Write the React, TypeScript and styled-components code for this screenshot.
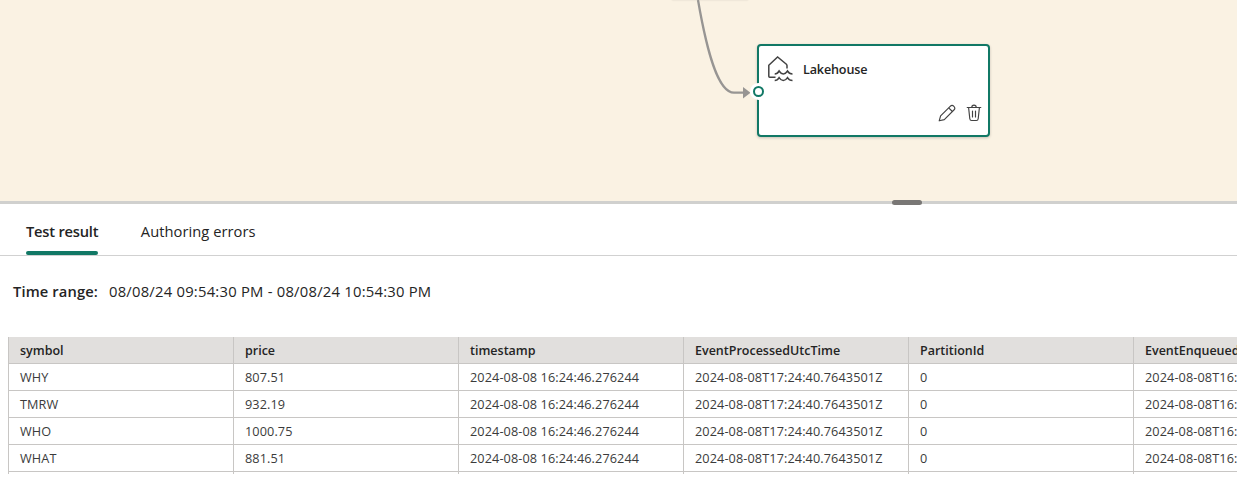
import React from "react";
import styled, { createGlobalStyle } from "styled-components";

const GlobalStyle = createGlobalStyle`
  *, *::before, *::after { box-sizing: border-box; }
  body {
    margin: 0;
    overflow: hidden;
    background: #fff;
    color: #242424;
    font-family: "Open Sans", "Noto Sans", sans-serif;
  }
`;

const Page = styled.main`
  display: flex;
  flex-direction: column;
  height: 483px;
  overflow: hidden;
`;

const Canvas = styled.section`
  position: relative;
  flex: 0 0 201px;
  overflow: hidden;
  background: #faf2e3;
`;

const UpstreamShadow = styled.div`
  position: absolute;
  left: 672px;
  top: -6px;
  width: 76px;
  height: 6px;
  box-shadow: 0 0 2px rgba(0, 0, 0, 0.16);
`;

const Edge = styled.svg`
  position: absolute;
  left: 680px;
  top: 0;
`;

const NodeCard = styled.article`
  position: absolute;
  left: 757px;
  top: 44px;
  width: 233px;
  height: 93px;
  padding: 9px 6px 13px 8px;
  display: flex;
  flex-direction: column;
  justify-content: space-between;
  background: #fff;
  border: 2px solid #117865;
  border-radius: 4px;
  box-shadow: 0 1px 3px rgba(0, 0, 0, 0.2);
`;

const NodeHeader = styled.div`
  display: flex;
  align-items: flex-start;
  gap: 9px;
`;

const NodeTitle = styled.span`
  padding-top: 6px;
  font-size: 12.6px;
  line-height: 18px;
  font-weight: 600;
  letter-spacing: -0.15px;
`;

const NodeActions = styled.div`
  display: flex;
  justify-content: flex-end;
  gap: 10px;
`;

const Port = styled.span`
  position: absolute;
  left: -9px;
  top: 37px;
  width: 17px;
  height: 17px;
  border-radius: 50%;
  background: #fff;
  display: grid;
  place-items: center;

  &::after {
    content: "";
    width: 11px;
    height: 11px;
    border: 2px solid #117865;
    border-radius: 50%;
  }
`;

const Splitter = styled.div`
  position: relative;
  flex: 0 0 3px;
  background: #d0d0ce;
`;

const SplitterGrip = styled.span`
  position: absolute;
  left: 892px;
  top: -1px;
  width: 30px;
  height: 5px;
  border-radius: 2.5px;
  background: #797775;
`;

const TabBar = styled.nav`
  flex: 0 0 52px;
  display: flex;
  gap: 42.5px;
  padding-left: 26px;
  border-bottom: 1px solid #d1d1d1;
`;

const Tab = styled.div<{ $active?: boolean; $spacing: number }>`
  display: flex;
  flex-direction: column;
  justify-content: space-between;
  padding-top: 17px;
  font-size: 14.7px;
  line-height: 20px;
  font-weight: ${(p) => (p.$active ? 600 : 400)};
  letter-spacing: ${(p) => p.$spacing}px;
  white-space: nowrap;

  &::after {
    content: "";
    height: 4px;
    border-radius: 2px;
    background: ${(p) => (p.$active ? "#117865" : "transparent")};
  }
`;

const TimeRange = styled.div`
  flex: 0 0 81px;
  display: flex;
  gap: 11px;
  padding: 25px 0 0 13px;
  line-height: 20px;
  white-space: nowrap;
`;

const RangeLabel = styled.span`
  font-size: 14.7px;
  font-weight: 600;
  letter-spacing: 0.13px;
`;

const RangeValue = styled.span`
  font-size: 14.8px;
  letter-spacing: 0.23px;
`;

const Grid = styled.div`
  height: 137px;
  margin-left: 8px;
  overflow: hidden;
`;

const Row = styled.div<{ $header?: boolean }>`
  display: grid;
  grid-template-columns: repeat(6, 225px);
  width: 1350px;
  height: 27px;
  background: ${(p) => (p.$header ? "#e1dfdd" : "#fff")};
  font-size: ${(p) => (p.$header ? 12.5 : 12.7)}px;
  font-weight: ${(p) => (p.$header ? 600 : 400)};
  line-height: ${(p) => (p.$header ? 27 : 26)}px;
  letter-spacing: ${(p) => (p.$header ? 0 : 0.1)}px;
  color: ${(p) => (p.$header ? "#242424" : "#3b3b3b")};
`;

const Cell = styled.div`
  height: 27px;
  border-left: 1px solid #c8c6c4;
  border-bottom: 1px solid #c8c6c4;
  padding-left: 11px;
  white-space: nowrap;
  overflow: hidden;
`;

const columns = [
  "symbol",
  "price",
  "timestamp",
  "EventProcessedUtcTime",
  "PartitionId",
  "EventEnqueuedUtcTime",
];

const quotes = [
  ["WHY", "807.51"],
  ["TMRW", "932.19"],
  ["WHO", "1000.75"],
  ["WHAT", "881.51"],
];

const rows = [
  ...quotes.map(([symbol, price]) => [
    symbol,
    price,
    "2024-08-08 16:24:46.276244",
    "2024-08-08T17:24:40.7643501Z",
    "0",
    "2024-08-08T16:24:46.2860000Z",
  ]),
  ["", "", "", "", "", ""],
];

const LakehouseIcon = () => (
  <svg width="27" height="28" viewBox="0 0 27 28" fill="none" stroke="#424242" strokeWidth="1.5">
    <path d="M8.5 22.2H2.7Q1.8 22.2 1.8 21.3V10.2L10.6 1.9L19.4 9.2Q20 9.8 20 10.6V13.4" />
    <path d="M7.7 18.9Q10.4 18.9 12.1 16Q14 18.9 16.3 18.9Q18.6 18.9 20.5 16Q22.2 18.9 25.5 18.9" />
    <path d="M7.7 25.6Q10.4 25.6 12.1 22.7Q14 25.6 16.3 25.6Q18.6 25.6 20.5 22.7Q22.2 25.6 25.5 25.6" />
  </svg>
);

const PencilIcon = () => (
  <svg width="18" height="18" viewBox="0 0 18 18" fill="none" stroke="#424242" strokeWidth="1.15" strokeLinejoin="round">
    <path d="M1.2 16.8L2.6 11.9L12.2 2.3A2.6 2.6 0 0 1 15.9 6L6.3 15.6L1.2 16.8Z" />
    <path d="M10.7 3.8L14.4 7.5" />
  </svg>
);

const TrashIcon = () => (
  <svg width="16" height="18" viewBox="0 0 16 18" fill="none" stroke="#424242" strokeWidth="1.15" strokeLinecap="round">
    <path d="M1.2 3.5H14.8M5.8 3.3A2.2 2.2 0 0 1 10.2 3.3M2.6 3.6L3.8 14.8Q4 16.5 5.6 16.5H10.4Q12 16.5 12.2 14.8L13.4 3.6M6.5 7V13M9.5 7V13" />
  </svg>
);

export default function App() {
  return (
    <Page>
      <GlobalStyle />
      <Canvas>
        <UpstreamShadow />
        <Edge width="80" height="110" viewBox="0 0 80 110">
          <path d="M18 0C27 52 38 92.7 54 92.7H64" fill="none" stroke="#979593" strokeWidth="2.3" />
          <path d="M63 87L70.5 92.7L63 98.4Z" fill="#979593" />
        </Edge>
        <NodeCard>
          <NodeHeader>
            <LakehouseIcon />
            <NodeTitle>Lakehouse</NodeTitle>
          </NodeHeader>
          <NodeActions>
            <PencilIcon />
            <TrashIcon />
          </NodeActions>
          <Port />
        </NodeCard>
      </Canvas>
      <Splitter>
        <SplitterGrip />
      </Splitter>
      <TabBar>
        <Tab $active $spacing={-0.22}>Test result</Tab>
        <Tab $spacing={0.05}>Authoring errors</Tab>
      </TabBar>
      <TimeRange>
        <RangeLabel>Time range:</RangeLabel>
        <RangeValue>08/08/24 09:54:30 PM - 08/08/24 10:54:30 PM</RangeValue>
      </TimeRange>
      <Grid>
        <Row $header>
          {columns.map((name) => (
            <Cell key={name}>{name}</Cell>
          ))}
        </Row>
        {rows.map((values, index) => (
          <Row key={index}>
            {values.map((value, column) => (
              <Cell key={column}>{value}</Cell>
            ))}
          </Row>
        ))}
      </Grid>
    </Page>
  );
}
